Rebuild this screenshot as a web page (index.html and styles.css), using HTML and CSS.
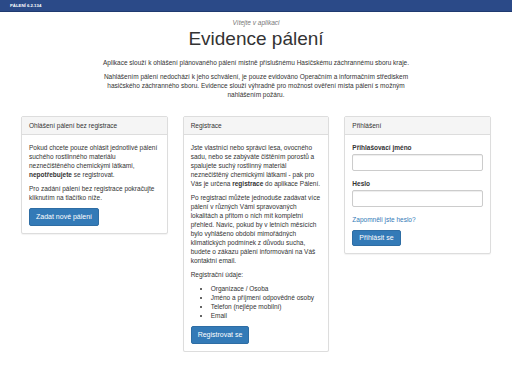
FILE: index.html
```html
<!DOCTYPE html>
<html lang="cs">
<head>
    <meta charset="UTF-8">
    <meta name="viewport" content="width=device-width, initial-scale=1.0">
    <title>Evidence pálení</title>
    <link rel="stylesheet" href="styles.css">
</head>
<body>
    <div class="topbar">
        <span class="brand">PÁLENÍ 6.2.134</span>
    </div>
    <div class="container">
        <div class="intro">
            <p class="welcome">Vítejte v aplikaci</p>
            <h1>Evidence pálení</h1>
            <p>Aplikace slouží k ohlášení plánovaného pálení místně příslušnému Hasičskému záchrannému sboru kraje.</p>
            <p>Nahlášením pálení nedochází k jeho schválení, je pouze evidováno Operačním a informačním střediskem hasičského záchranného sboru. Evidence slouží výhradně pro možnost ověření místa pálení s možným nahlášením požáru.</p>
        </div>
        <div class="row">
            <div class="panel">
                <div class="panel-heading">Ohlášení pálení bez registrace</div>
                <div class="panel-body">
                    <p>Pokud chcete pouze ohlásit jednotlivé pálení suchého rostlinného materiálu neznečištěného chemickými látkami, <b>nepotřebujete</b> se registrovat.</p>
                    <p>Pro zadání pálení bez registrace pokračujte kliknutím na tlačítko níže.</p>
                    <button class="btn">Zadat nové pálení</button>
                </div>
            </div>
            <div class="panel">
                <div class="panel-heading">Registrace</div>
                <div class="panel-body">
                    <p>Jste vlastníci nebo správci lesa, ovocného sadu, nebo se zabýváte čištěním porostů a spalujete suchý rostlinný materiál neznečištěný chemickými látkami - pak pro Vás je určena <b>registrace</b> do aplikace Pálení.</p>
                    <p>Po registraci můžete jednoduše zadávat více pálení v různých Vámi spravovaných lokalitách a přitom o nich mít kompletní přehled. Navíc, pokud by v letních měsících bylo vyhlášeno období mimořádných klimatických podmínek z důvodu sucha, budete o zákazu pálení informováni na Váš kontaktní email.</p>
                    <p>Registrační údaje:</p>
                    <ul>
                        <li>Organizace / Osoba</li>
                        <li>Jméno a příjmení odpovědné osoby</li>
                        <li>Telefon (nejlépe mobilní)</li>
                        <li>Email</li>
                    </ul>
                    <button class="btn">Registrovat se</button>
                </div>
            </div>
            <div class="panel">
                <div class="panel-heading">Přihlášení</div>
                <div class="panel-body">
                    <label class="field-label" for="login">Přihlašovací jméno</label>
                    <input class="field" id="login" type="text">
                    <label class="field-label" for="pass">Heslo</label>
                    <input class="field" id="pass" type="password">
                    <a class="forgot" href="#">Zapomněli jste heslo?</a>
                    <button class="btn btn-sm">Přihlásit se</button>
                </div>
            </div>
        </div>
    </div>
</body>
</html>
```

FILE: styles.css
```css
body {
    margin: 0;
    font-family: "Liberation Sans", Arial, sans-serif;
    font-size: 6.5px;
    line-height: 9px;
    color: #333;
    background: #fff;
}
.topbar {
    height: 11px;
    background-color: #2b4a88;
    border-bottom: 1px solid #1f3a70;
    display: flex;
    align-items: center;
    padding-left: 10px;
}
.brand {
    color: #fff;
    font-size: 4.3px;
    font-weight: bold;
    line-height: 5px;
}
.container {
    width: 470px;
    margin: 0 auto;
}
.intro {
    text-align: center;
    width: 320px;
    margin: 0 auto;
    padding-top: 6px;
}
.intro p {
    margin: 0 0 5px;
}
.intro .welcome {
    font-style: italic;
    color: #777;
    margin: 0;
}
h1 {
    font-size: 19px;
    font-weight: normal;
    line-height: 22px;
    margin: 1px 0 8px;
    color: #333;
}
.row {
    display: grid;
    grid-template-columns: repeat(3, 1fr);
    gap: 15px;
    align-items: start;
    margin-top: 17px;
}
.panel {
    border: 1px solid #ddd;
    border-radius: 2px;
    box-shadow: 0 1px 1px rgba(0, 0, 0, 0.05);
    background: #fff;
}
.panel-heading {
    background: #f5f5f5;
    border-bottom: 1px solid #ddd;
    padding: 4px 7px;
}
.panel-body {
    padding: 7.5px 7px;
}
.panel-body p {
    margin: 0 0 5px;
}
ul {
    margin: 0 0 5px;
    padding-left: 20px;
}
.btn {
    display: inline-block;
    font-family: inherit;
    font-size: 7px;
    line-height: 9px;
    color: #fff;
    background-color: #337ab7;
    border: 1px solid #2e6da4;
    border-radius: 2px;
    padding: 3.5px 6px;
    margin-top: 1px;
}
.btn-sm {
    padding: 2.5px 6px;
}
.field-label {
    display: block;
    font-weight: bold;
    margin-bottom: 2.5px;
}
.field {
    display: block;
    box-sizing: border-box;
    width: 100%;
    height: 17px;
    border: 1px solid #ccc;
    border-radius: 2px;
    box-shadow: inset 0 1px 1px rgba(0, 0, 0, 0.075);
    margin: 0 0 7.5px;
}
.forgot {
    display: block;
    color: #337ab7;
    text-decoration: none;
    margin: 2px 0 5px;
}
```
